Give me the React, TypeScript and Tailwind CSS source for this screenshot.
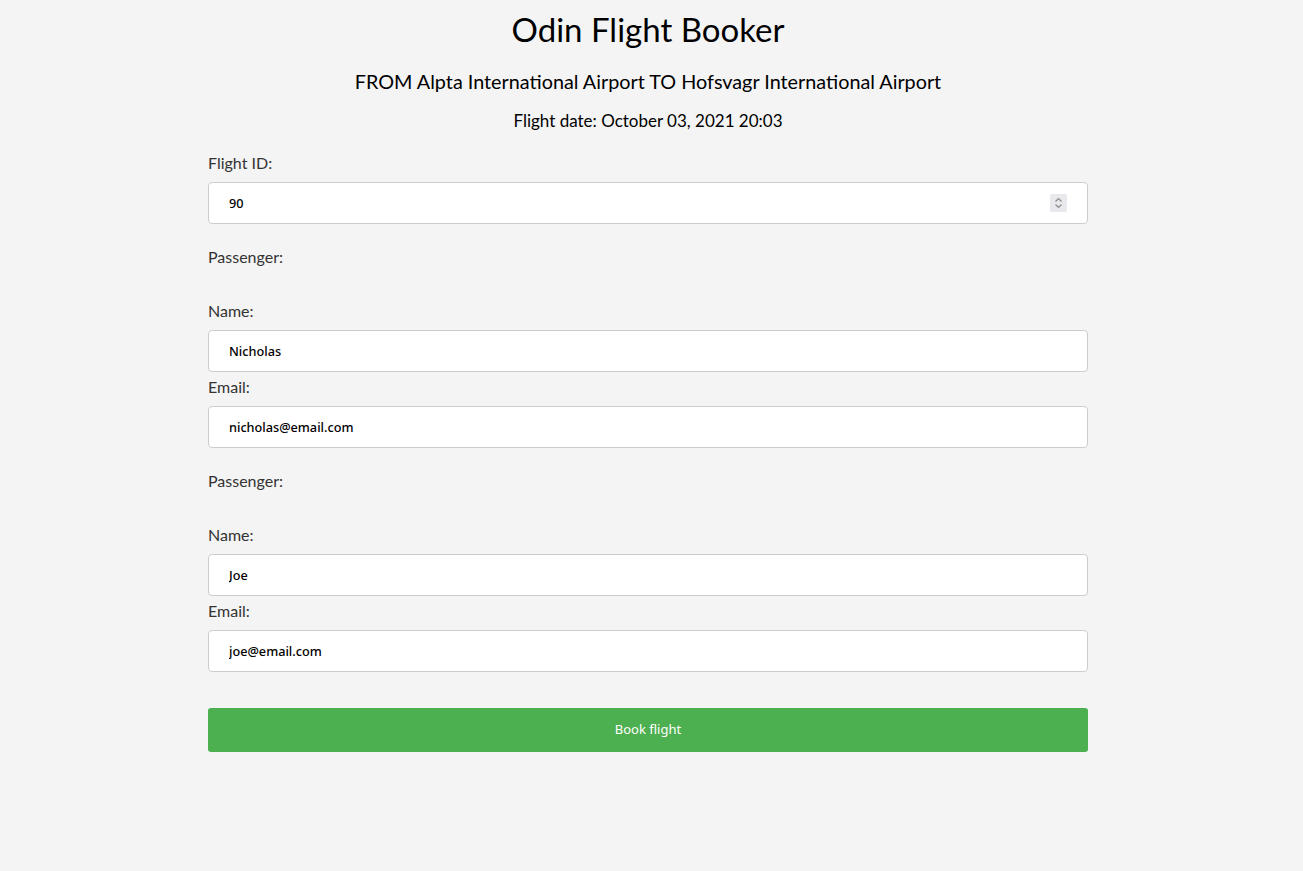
import { useState } from 'react';

const head = { fontFamily: 'Lato, "Noto Sans", sans-serif' };
const ui = { fontFamily: '"Noto Sans", "Open Sans", sans-serif' };

function Field({ label, value, onChange, spinner }: { label: string; value: string; onChange: (v: string) => void; spinner?: boolean }) {
  return (
    <div className="flex flex-col">
      <label className="text-[16px] leading-[20px] text-[#333] mb-[9px]" style={head}>{label}</label>
      <div className="relative">
        <input
          type="text"
          value={value}
          onChange={e => onChange(e.target.value)}
          style={ui}
          className="w-full h-[42px] bg-white border border-[#ccc] rounded-[4px] pl-[20px] pr-[40px] text-[12.7px] text-black font-medium focus:outline-none"
        />
        {spinner && (
          <div className="absolute right-[21px] top-[12px] w-[17px] h-[18px] bg-[#e9e9ed] rounded-[2px] flex items-center justify-center">
            <svg width="9" height="12" viewBox="0 0 9 12" fill="none" stroke="#8a8a8a" strokeWidth="1.2">
              <path d="M1.5 4.5 4.5 1.5 7.5 4.5" />
              <path d="M1.5 7.5 4.5 10.5 7.5 7.5" />
            </svg>
          </div>
        )}
      </div>
    </div>
  );
}

export default function App() {
  const [flightId, setFlightId] = useState('90');
  const [pax, setPax] = useState([
    { name: 'Nicholas', email: 'nicholas@email.com' },
    { name: 'Joe', email: 'joe@email.com' },
  ]);

  const update = (i: number, key: 'name' | 'email', v: string) =>
    setPax(p => p.map((x, j) => (j === i ? { ...x, [key]: v } : x)));

  return (
    <div className="min-h-screen bg-[#f4f4f4]">
      <div className="w-[1296px] pb-20">
        <div className="w-[880px] mx-auto">
          <h1 className="text-center text-[33px] leading-[40px] pt-[9px] text-black" style={head}>Odin Flight Booker</h1>
          <h2 className="text-center text-[19.8px] leading-[24px] mt-[20px] text-black" style={head}>
            FROM Alpta International Airport TO Hofsvagr International Airport
          </h2>
          <p className="text-center text-[17px] leading-[22px] mt-[17px] text-black" style={head}>Flight date: October 03, 2021 20:03</p>

          <form onSubmit={e => e.preventDefault()} className="mt-[21px]">
            <Field label="Flight ID:" value={flightId} onChange={setFlightId} spinner />

            {pax.map((p, i) => (
              <div key={i} className="mt-[23px]">
                <p className="text-[16px] leading-[20px] text-[#333]" style={head}>Passenger:</p>
                <div className="mt-[34px]">
                  <Field label="Name:" value={p.name} onChange={v => update(i, 'name', v)} />
                </div>
                <div className="mt-[5px]">
                  <Field label="Email:" value={p.email} onChange={v => update(i, 'email', v)} />
                </div>
              </div>
            ))}

            <button
              type="submit"
              style={ui}
              className="mt-[36px] w-full h-[44px] bg-[#4caf50] text-white text-[13px] rounded-[3px]"
            >
              Book flight
            </button>
          </form>
        </div>
      </div>
    </div>
  );
}
